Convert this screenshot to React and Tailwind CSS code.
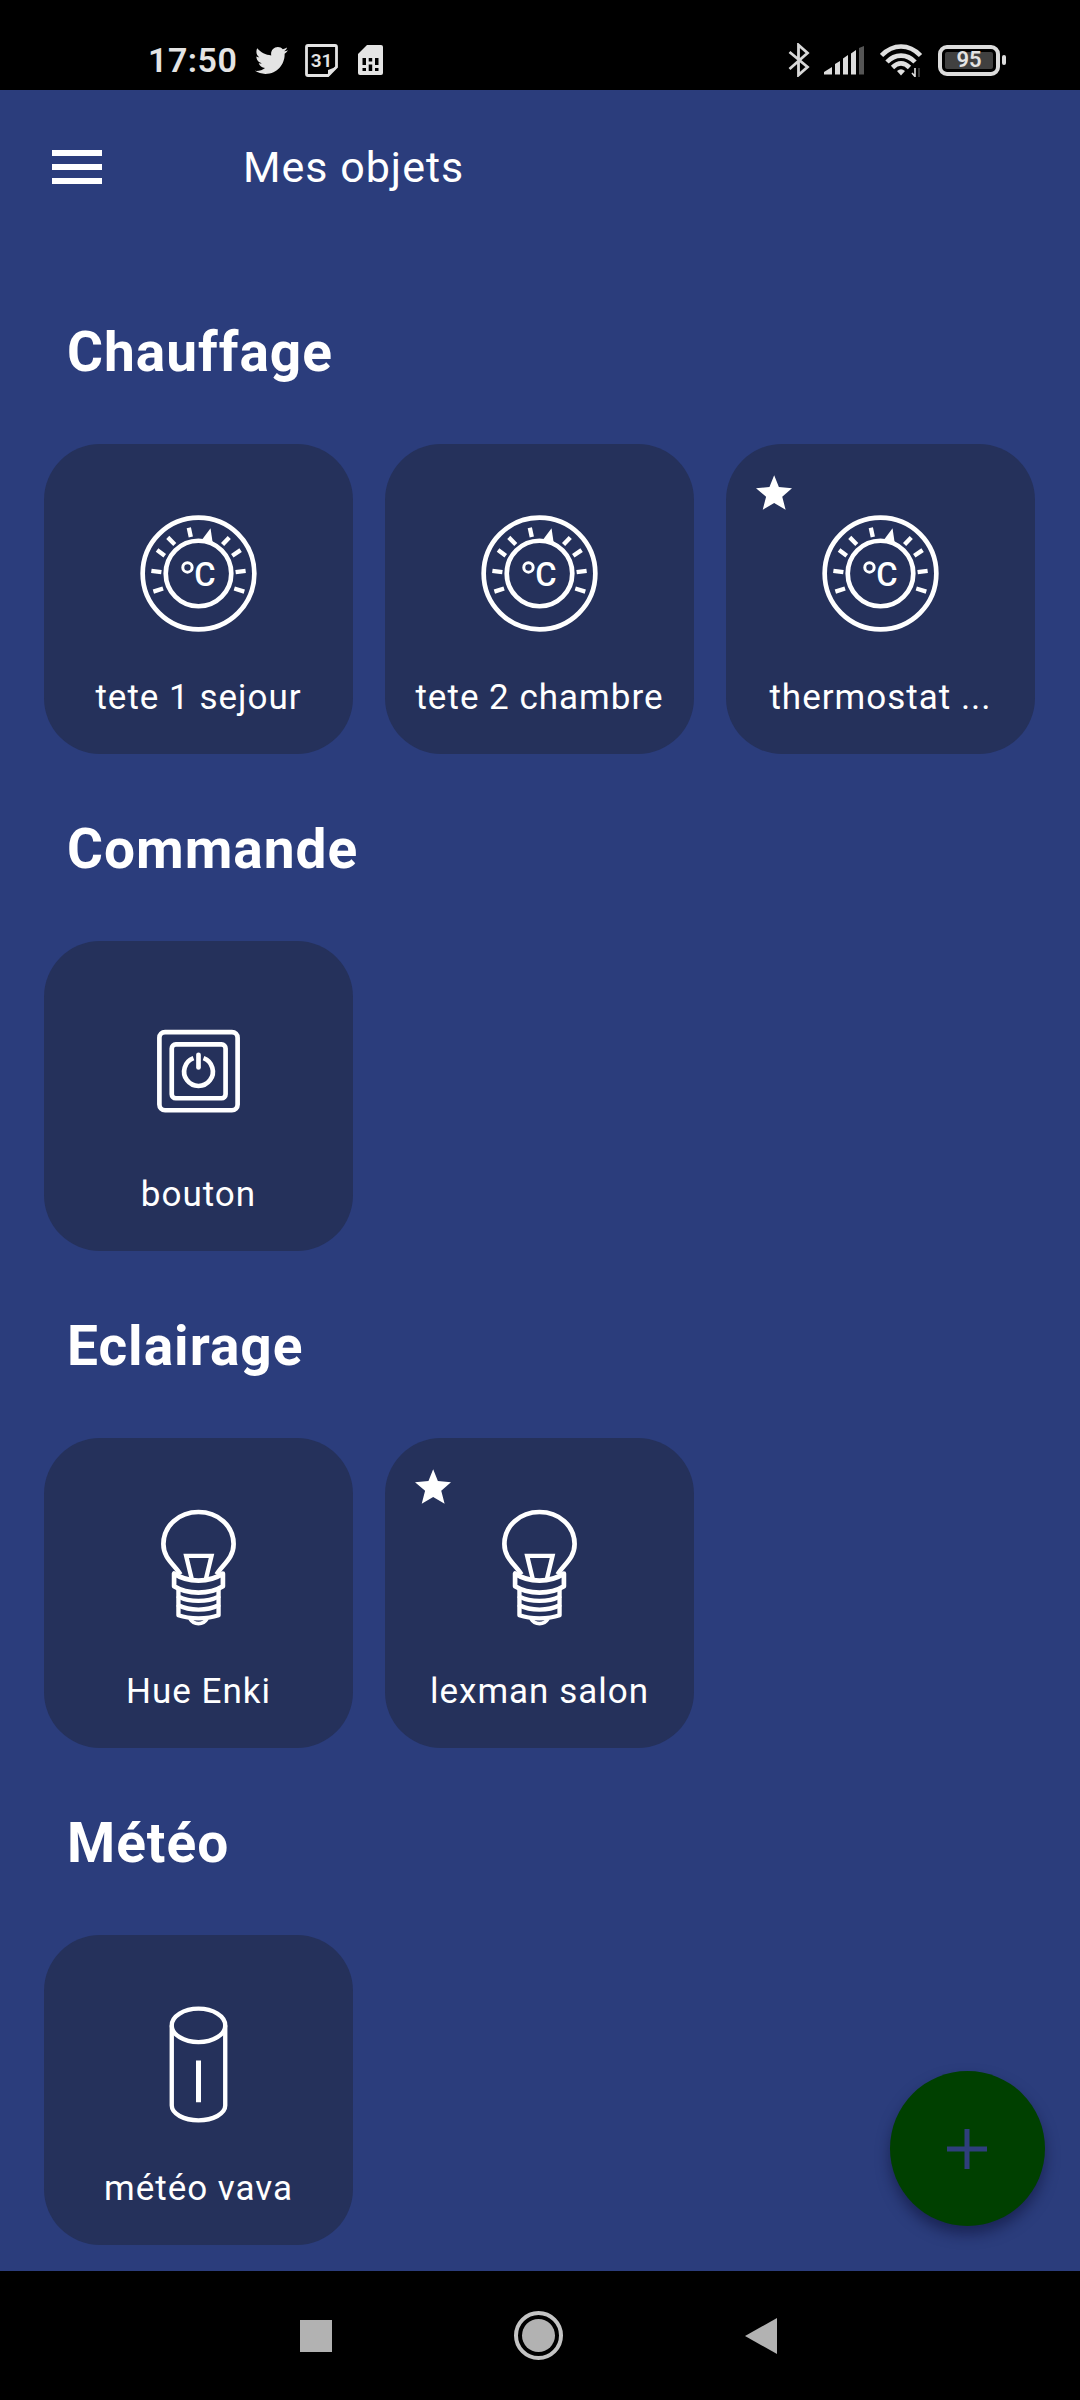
import React from 'react';
import { FaTwitter } from 'react-icons/fa';

const ThermostatIcon = () => (
  <svg viewBox="0 0 350 350" className="h-[117px] w-[117px]" fill="none" stroke="white" strokeWidth="14">
    <circle cx="175" cy="175" r="167" />
    <circle cx="175" cy="175" r="98" />
    <path
      strokeWidth="13"
      d="M146 38L152 66M83 67L104 88M51 105L74 122M34 167L64 171M40 229L69 220M267 67L247 88M301 105L276 122M316 167L286 171M312 229L282 220"
    />
    <path d="M211 40L181 80L218 87Z" fill="white" stroke="none" />
    <circle cx="142" cy="157" r="14" strokeWidth="9" />
    <text x="162" y="212" fontSize="98" fontWeight="500" fontFamily="Roboto, sans-serif" fill="white" stroke="none">C</text>
  </svg>
);

const SwitchIcon = () => (
  <svg viewBox="0 0 350 350" className="h-[117px] w-[117px]" fill="none" stroke="white" strokeWidth="14">
    <rect x="58" y="60" width="234" height="234" rx="17" />
    <rect x="95" y="97" width="161" height="161" rx="12" />
    <path d="M160 138A43 43 0 1 0 190 138" />
    <path d="M175 128V166" strokeLinecap="round" />
  </svg>
);

const BulbIcon = () => (
  <svg viewBox="0 0 350 350" className="h-[117px] w-[117px]" fill="none" stroke="white" strokeWidth="14" strokeLinejoin="round">
    <path d="M121 196C103 166 70 148 70 105C70 50 117 9 175 9S280 50 280 105C280 148 247 166 229 196" />
    <path d="M155 210L138 140H214L197 210" strokeLinejoin="miter" strokeWidth="13" />
    <path d="M102 193V231Q132 250 175 250T248 231V193C225 209 200 214 175 214S125 209 102 193Z" />
    <path d="M115 240V262Q140 275 175 275T235 262V240" strokeWidth="13" />
    <path d="M115 262V288Q140 301 175 301T235 288V262" strokeWidth="13" />
    <path d="M115 288V318Q140 327 175 327T235 318V288" strokeWidth="13" />
    <path d="M149 328Q158 343 175 343T201 328" strokeWidth="11" />
  </svg>
);

const SensorIcon = () => (
  <svg viewBox="0 0 350 350" className="h-[117px] w-[117px]" fill="none" stroke="white" strokeWidth="13">
    <ellipse cx="175" cy="58" rx="80" ry="50" />
    <path d="M95 58V298C95 322 131 342 175 342S255 322 255 298V58" />
    <path d="M175 163V288" strokeWidth="15" />
  </svg>
);

const StarIcon = () => (
  <svg viewBox="0 0 107 103" className="absolute left-[30px] top-[31px] h-[35px] w-9" fill="white">
    <path d="M54 0L68 35L107 39L78 64L88 103L54 83L20 103L30 64L0 39L40 35Z" />
  </svg>
);

const sections = [
  {
    title: 'Chauffage',
    items: [
      { name: 'tete 1 sejour', Icon: ThermostatIcon },
      { name: 'tete 2 chambre', Icon: ThermostatIcon },
      { name: 'thermostat ...', Icon: ThermostatIcon, favorite: true },
    ],
  },
  { title: 'Commande', items: [{ name: 'bouton', Icon: SwitchIcon }] },
  {
    title: 'Eclairage',
    items: [
      { name: 'Hue Enki', Icon: BulbIcon },
      { name: 'lexman salon', Icon: BulbIcon, favorite: true },
    ],
  },
  { title: 'Météo', items: [{ name: 'météo vava', Icon: SensorIcon }] },
];

const StatusBar = () => (
  <div className="flex h-[90px] shrink-0 items-center bg-black pl-[148px] pr-[74px] pt-[30px] text-[#e4e4e4]">
    <span className="w-[107px] text-[34px] font-semibold leading-10 tracking-[0.500px]">17:50</span>
    <FaTwitter className="h-[33px] w-[33px]" />
    <svg viewBox="0 0 33 33" className="ml-[17px] h-[33px] w-[33px]" fill="none">
      <path d="M3 1.500H30Q31.500 1.500 31.500 3V23L23 31.500H3Q1.500 31.500 1.500 30V3Q1.500 1.500 3 1.500Z" stroke="#e4e4e4" strokeWidth="2.800" />
      <path d="M31 23L23 31V26Z" fill="#e4e4e4" />
      <text x="16.500" y="22.500" textAnchor="middle" fontSize="19" fontWeight="600" fill="#e4e4e4">31</text>
    </svg>
    <svg viewBox="0 0 25 30" className="ml-5 h-[30px] w-[25px]">
      <path d="M9 0H23Q25 0 25 2V28Q25 30 23 30H2Q0 30 0 28V9Z" fill="#e4e4e4" />
      <path d="M4.500 13h3.500v7h-3.500zM10.700 13h3.500v3.500h-3.500zM17 13h3.500v7h-3.500zM4.500 23h3.500v3h-3.500zM10.700 19.500h3.500v6.500h-3.500zM17 23h3.500v3h-3.500z" fill="black" />
    </svg>

    <svg viewBox="0 0 22 34" className="ml-auto h-[34px] w-[22px]" fill="none" stroke="#d8d8d8" strokeWidth="2.800">
      <path d="M1.500 9L19.500 24L10.500 32V2L19.500 10L1.500 26" />
    </svg>
    <svg viewBox="0 0 40 29" className="ml-3.5 h-[29px] w-10">
      <path d="M0 28.500V26L8 21V28.500ZM11 18L16 15V28.500H11ZM19 12.500L24 9V28.500H19ZM27 7.500L32 4V28.500H27Z" fill="#dcdcdc" />
      <path d="M35 2L40 0V28.500H35Z" fill="#555555" />
    </svg>
    <svg viewBox="0 0 43 33" className="ml-4 h-[33px] w-[43px]" fill="none" stroke="#e0e0e0" strokeWidth="4.600">
      <path d="M1.500 11.500C13 -0.500 29 -0.500 40.500 11.500" />
      <path d="M7 18C15 9.500 27 9.500 35 18" />
      <path d="M12.500 23.500C18 18 24 18 29.500 23.500" />
      <path d="M17 27Q21 23.500 25 27L21 31.500Z" fill="#e0e0e0" stroke="none" />
      <path d="M35 24V33M32 29L35 32.500" strokeWidth="1.600" />
      <path d="M39 24V33" stroke="#444444" strokeWidth="1.600" />
    </svg>
    <div className="ml-[15px] flex items-center">
      <div className="flex h-[31px] w-[62px] items-center justify-center rounded-[9px] border-4 border-[#dcdcdc] p-[3px]">
        <div className="flex h-full w-full items-center justify-center rounded-xs bg-[#404040] text-[22px] font-semibold leading-none">95</div>
      </div>
      <div className="ml-0.5 h-2.5 w-1 rounded-xs bg-[#dcdcdc]" />
    </div>
  </div>
);

const DeviceCard = ({ name, Icon, favorite }) => (
  <div className="relative flex h-[310px] w-[309px] flex-col items-center rounded-[56px] bg-[#25315b] pt-[71px]">
    {favorite && <StarIcon />}
    <Icon />
    <span className="mt-[46px] whitespace-nowrap text-[35px] leading-10 tracking-[1px]">{name}</span>
  </div>
);

const NavigationBar = () => (
  <div className="flex h-[129px] shrink-0 items-center justify-between bg-black pl-[300px] pr-[303px]">
    <div className="h-8 w-8 bg-[#b2b2b2]" />
    <div className="flex h-[49px] w-[49px] items-center justify-center rounded-full border-4 border-[#c4c4c4]">
      <div className="h-[33px] w-[33px] rounded-full bg-[#b2b2b2]" />
    </div>
    <svg viewBox="0 0 32 36" className="h-9 w-8" fill="#b2b2b2">
      <path d="M32 0V36L0 18Z" />
    </svg>
  </div>
);

const App = () => {
  return (
    <div className="relative flex h-[2400px] w-[1080px] flex-col overflow-hidden bg-[#2b3d7c] font-['Roboto',sans-serif] text-white">
      <StatusBar />
      <main className="flex-1">
        <header className="flex h-[167px] items-start pl-[52px] pt-[50px]">
          <div className="mt-[10px] flex w-[50px] flex-col gap-2">
            <div className="h-1.5 bg-white" />
            <div className="h-1.5 bg-white" />
            <div className="h-1.5 bg-white" />
          </div>
          <h1 className="ml-[141px] text-[43px] leading-[55px] tracking-[1px]">Mes objets</h1>
        </header>
        {sections.map((section) => (
          <section key={section.title} className="pl-11 pt-[63px]">
            <h2 className="mb-[60px] pl-[23px] text-[55px] font-bold leading-[64px] tracking-[1px]">{section.title}</h2>
            <div className="flex gap-8">
              {section.items.map((item) => (
                <DeviceCard key={item.name} {...item} />
              ))}
            </div>
          </section>
        ))}
      </main>
      <NavigationBar />
      <button className="absolute left-[890px] top-[2071px] flex h-[155px] w-[155px] items-center justify-center rounded-full bg-[#004000] shadow-[0_8px_14px_rgba(15,20,60,0.6)]">
        <svg viewBox="0 0 40 40" className="mr-0.5 h-10 w-10" stroke="#2f3f7c" strokeWidth="5">
          <path d="M20 0V40M0 20H40" />
        </svg>
      </button>
    </div>
  );
};

export default App;
